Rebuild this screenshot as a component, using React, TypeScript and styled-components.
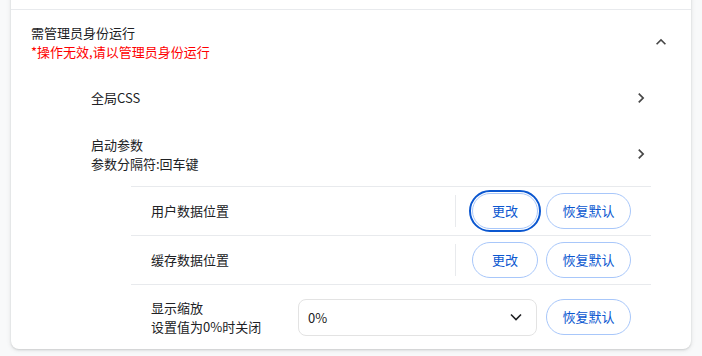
import React from "react";
import styled, { createGlobalStyle } from "styled-components";

const Global = createGlobalStyle`
  html, body {
    margin: 0;
    padding: 0;
    overflow: hidden;
    background: #f8f9fa;
  }
  body {
    font-family: "Noto Sans CJK SC", "Noto Sans", sans-serif;
    font-size: 13px;
    color: #202124;
  }
`;

const Page = styled.div`
  padding: 0 11px 8px;
`;

const Card = styled.div`
  margin-top: -40px;
  background: #fff;
  border-radius: 8px;
  box-shadow: 0 1px 2px rgba(60, 64, 67, 0.18), 0 1px 4px 1px rgba(60, 64, 67, 0.08);
  overflow: hidden;
`;

const PrevRow = styled.div`
  height: 49px;
`;

const HeaderRow = styled.div`
  display: flex;
  align-items: center;
  min-height: 64px;
  padding: 0 20px;
  border-top: 1px solid #e8eaed;
`;

const TextBlock = styled.div`
  flex: 1;
  display: flex;
  flex-direction: column;
  line-height: 19.5px;
  min-width: 0;
`;

const Secondary = styled.div<{ $warn?: boolean }>`
  color: ${(p) => (p.$warn ? "#ff0000" : "#202124")};
`;

const Sub = styled.div`
  margin: 0 20px 0 60px;
`;

const LinkRow = styled.div<{ $tall?: boolean }>`
  display: flex;
  align-items: center;
  min-height: ${(p) => (p.$tall ? 64 : 48)}px;
  padding: 0 20px;
`;

const IconBox = styled.div`
  width: 20px;
  height: 20px;
  display: flex;
  align-items: center;
  justify-content: center;
  color: #474747;
`;

const Row = styled.div<{ $tall?: boolean }>`
  display: flex;
  align-items: center;
  min-height: ${(p) => (p.$tall ? 64 : 48)}px;
  padding: 0 20px;
  border-top: 1px solid #e8eaed;
`;

const Separator = styled.div`
  width: 1px;
  height: 32px;
  background: #e8eaed;
  margin: 0 16px 0 0;
`;

const Pill = styled.button<{ $focus?: boolean }>`
  height: 36px;
  padding: 0 15px;
  border: 1px solid #a8c7fa;
  border-radius: 18px;
  background: #fff;
  color: #0b57d0;
  font-family: "Noto Sans CJK SC", "Noto Sans", sans-serif;
  font-size: 13px;
  line-height: 34px;
  cursor: pointer;
  outline: ${(p) => (p.$focus ? "2px solid #0b57d0" : "none")};
  outline-offset: 1px;
  & + & {
    margin-left: 8px;
  }
`;

const WideBtn = styled(Pill)`
  width: 66px;
  padding: 0;
`;

const ResetBtn = styled(Pill)`
  width: 85px;
  padding: 0;
`;

const Select = styled.div`
  width: 239px;
  height: 37px;
  box-sizing: border-box;
  border: 1px solid #e3e3e3;
  border-radius: 8px;
  display: flex;
  align-items: center;
  justify-content: space-between;
  padding: 0 14px 0 9px;
  margin-right: 9px;
  color: #202124;
`;

const ChevronRight = () => (
  <svg width="20" height="20" viewBox="0 0 24 24" fill="currentColor">
    <path d="M10 6L8.59 7.41 13.17 12l-4.58 4.59L10 18l6-6z" />
  </svg>
);

const ChevronUp = () => (
  <svg width="20" height="20" viewBox="0 0 24 24" fill="currentColor">
    <path d="M12 8l-6 6 1.41 1.41L12 10.83l4.59 4.58L18 14z" />
  </svg>
);

const ChevronDown = () => (
  <svg width="12" height="8" viewBox="0 0 12 8" fill="none" stroke="#202124" strokeWidth="1.6">
    <path d="M1 1.5l5 5 5-5" />
  </svg>
);

export default function App() {
  return (
    <>
      <Global />
      <Page>
        <Card>
          <PrevRow />
          <HeaderRow>
            <TextBlock>
              <div>需管理员身份运行</div>
              <Secondary $warn>*操作无效,请以管理员身份运行</Secondary>
            </TextBlock>
            <IconBox>
              <ChevronUp />
            </IconBox>
          </HeaderRow>
          <Sub>
            <LinkRow>
              <TextBlock>
                <div>全局CSS</div>
              </TextBlock>
              <IconBox>
                <ChevronRight />
              </IconBox>
            </LinkRow>
            <LinkRow $tall>
              <TextBlock>
                <div>启动参数</div>
                <Secondary>参数分隔符:回车键</Secondary>
              </TextBlock>
              <IconBox>
                <ChevronRight />
              </IconBox>
            </LinkRow>
            <Sub>
              <Row>
                <TextBlock>
                  <div>用户数据位置</div>
                </TextBlock>
                <Separator />
                <WideBtn $focus>更改</WideBtn>
                <ResetBtn>恢复默认</ResetBtn>
              </Row>
              <Row>
                <TextBlock>
                  <div>缓存数据位置</div>
                </TextBlock>
                <Separator />
                <WideBtn>更改</WideBtn>
                <ResetBtn>恢复默认</ResetBtn>
              </Row>
              <Row $tall>
                <TextBlock>
                  <div>显示缩放</div>
                  <Secondary>设置值为0%时关闭</Secondary>
                </TextBlock>
                <Select>
                  <span>0%</span>
                  <ChevronDown />
                </Select>
                <ResetBtn>恢复默认</ResetBtn>
              </Row>
            </Sub>
          </Sub>
        </Card>
      </Page>
    </>
  );
}
